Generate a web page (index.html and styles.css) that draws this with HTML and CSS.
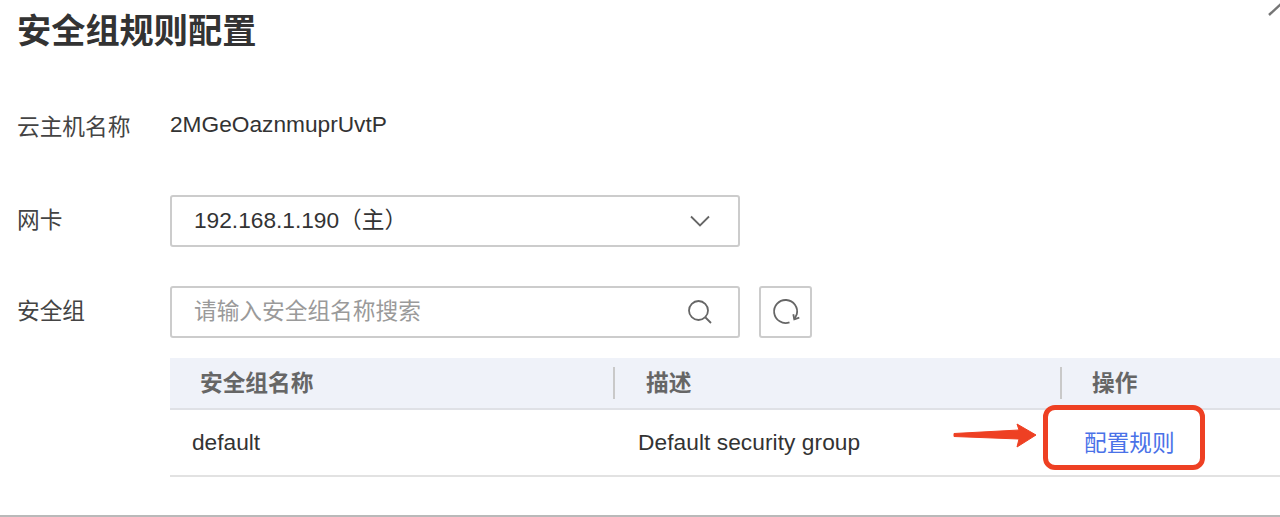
FILE: index.html
```html
<!DOCTYPE html>
<html lang="zh-CN">
<head>
<meta charset="utf-8">
<title>安全组规则配置</title>
<link rel="stylesheet" href="styles.css">
</head>
<body>
<div class="dialog">
  <svg class="close" width="14" height="14" viewBox="0 0 14 14"><path d="M1 12L14 0" stroke="#757575" stroke-width="2.4" fill="none"/></svg>
  <h1 class="title">安全组规则配置</h1>
  <div class="field field-host">
    <span class="label">云主机名称</span>
    <span class="value">2MGeOaznmuprUvtP</span>
  </div>
  <div class="field field-nic">
    <span class="label label-up">网卡</span>
    <div class="box box-wide box-select">
      <span class="box-text">192.168.1.190（主）</span>
      <svg class="chevron" width="22" height="14" viewBox="0 0 22 14"><path d="M2 2.5L11 11.5L20 2.5" stroke="#666" stroke-width="1.8" fill="none"/></svg>
    </div>
  </div>
  <div class="field field-group">
    <span class="label label-up">安全组</span>
    <div class="box box-wide box-search">
      <span class="box-text placeholder">请输入安全组名称搜索</span>
      <svg class="search" width="26" height="26" viewBox="0 0 26 26"><circle cx="11.5" cy="11.5" r="9.5" stroke="#666" stroke-width="1.8" fill="none"/><path d="M18.5 18.5L24 24" stroke="#666" stroke-width="1.8" fill="none"/></svg>
    </div>
    <div class="box box-btn">
      <svg width="28" height="28" viewBox="0 0 28 28"><path d="M17.5 24.3A11.5 11.5 0 1 1 24.7 16.5L22.3 21.3" stroke="#666" stroke-width="1.8" fill="none"/><path d="M21.3 16.3L22.3 21.3L27.3 19.7" stroke="#666" stroke-width="1.8" fill="none"/></svg>
    </div>
  </div>
  <div class="table">
    <div class="thead">
      <div class="th">安全组名称</div>
      <div class="th th-sep th-desc">描述</div>
      <div class="th th-sep">操作</div>
    </div>
    <div class="tbody">
      <div class="td">default</div>
      <div class="td td-desc">Default security group</div>
      <div class="td td-action"><a class="link" href="#">配置规则</a></div>
    </div>
  </div>
  <svg class="arrow" width="84" height="26" viewBox="0 0 84 26"><path d="M1 10.5L66 7L64 1L83 12L64 24L66 16L1 13.5Z" fill="#ee4023" stroke="#ee4023" stroke-linejoin="round"/></svg>
  <div class="highlight"></div>
</div>
</body>
</html>
```
FILE: styles.css
```css
* { box-sizing: border-box; }
html, body { margin: 0; padding: 0; background: #fff; }
body { font-family: "Liberation Sans", "Noto Sans CJK SC", sans-serif; color: #252b3a; }
.dialog { position: relative; width: 1280px; height: 517px; overflow: hidden; border-bottom: 2px solid #b9b9b9; padding-left: 18px; }
.close { position: absolute; left: 1268px; top: 3px; }
.title { margin: 0 0 0 -1px; padding-top: 10px; height: 100px; font-size: 34.2px; line-height: 42px; font-weight: 700; color: #333; }
.field { display: flex; align-items: center; }
.field-host { height: 50px; }
.field-nic { margin-top: 45px; }
.field-group { margin-top: 39px; }
.label { width: 152px; margin-left: -1px; margin-right: 1px; flex: none; font-size: 22.7px; color: #444; }
.label-up { padding-bottom: 6px; }
.value { font-size: 22.7px; color: #333; padding-bottom: 2px; }
.box { display: flex; align-items: center; height: 52px; border: 2px solid #ccc; border-radius: 3px; background: #fff; }
.box-wide { width: 570px; padding-left: 22px; justify-content: space-between; }
.box-select { padding-right: 27px; }
.box-search { padding-right: 25px; }
.box-btn { width: 53px; margin-left: 19px; justify-content: center; }
.box-text { font-size: 22.7px; color: #333; padding-bottom: 6px; }
.placeholder { color: #9a9a9a; }
.table { margin: 20px 0 0 152px; }
.thead, .tbody { display: grid; grid-template-columns: 443px 447px 1fr; }
.thead { height: 52px; background: #eff2f9; border-bottom: 2px solid #dfe1e6; align-items: center; }
.th { padding-left: 30px; font-size: 22.7px; font-weight: 700; color: #666; height: 32px; line-height: 32px; }
.th-sep { border-left: 2px solid #c9c9c9; }
.th-desc { padding-left: 31px; }
.tbody { height: 67px; border-bottom: 2px solid #e2e2e2; align-items: center; }
.td { padding-left: 22px; font-size: 22.7px; color: #333; }
.td-desc { padding-left: 25px; letter-spacing: 0.07px; }
.td-action { padding-left: 24px; padding-bottom: 3px; }
.link { color: #4a72e8; text-decoration: none; }
.arrow { position: absolute; left: 953px; top: 423px; }
.highlight { position: absolute; left: 1043px; top: 405px; width: 162px; height: 65px; border: 5px solid #ee4023; border-radius: 12px; }
```
